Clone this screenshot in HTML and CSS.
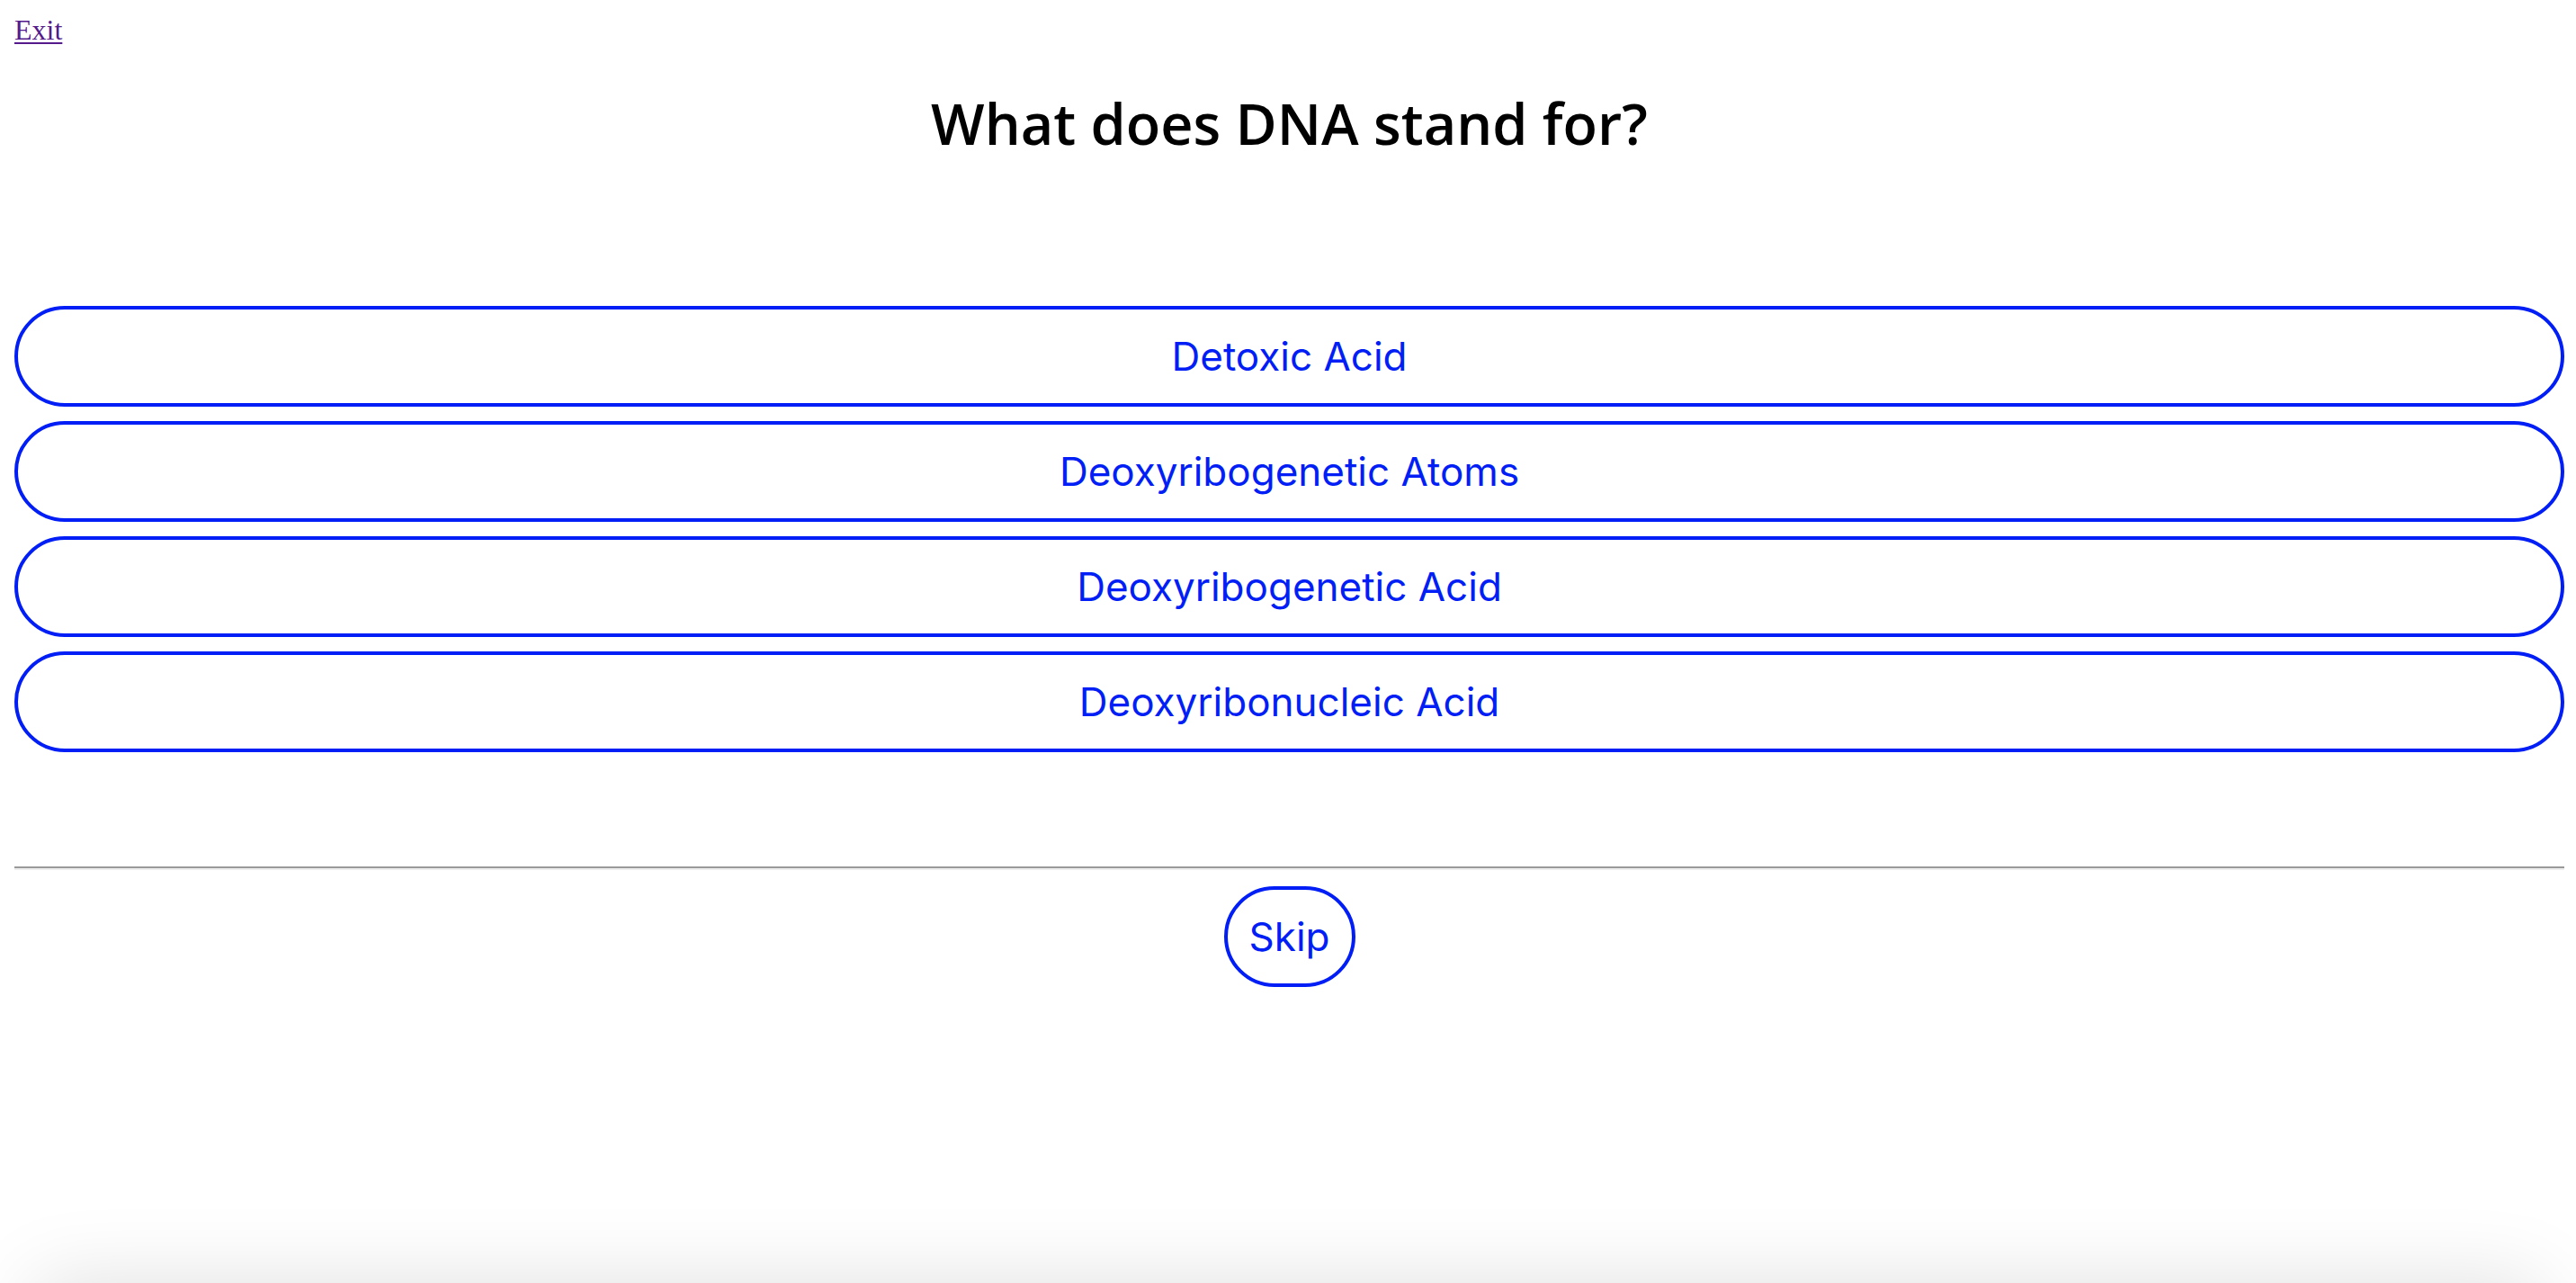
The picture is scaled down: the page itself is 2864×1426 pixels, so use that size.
FILE: index.html
```html
<!DOCTYPE html>
<html lang="en">
<head>
<meta charset="utf-8">
<title>Quiz</title>
<link rel="stylesheet" href="styles.css">
</head>
<body>
  <div class="topbar"><a class="exit" href="#">Exit</a></div>
  <h1 class="question">What does DNA stand for?</h1>
  <div class="answers">
    <button class="answer">Detoxic Acid</button>
    <button class="answer">Deoxyribogenetic Atoms</button>
    <button class="answer">Deoxyribogenetic Acid</button>
    <button class="answer">Deoxyribonucleic Acid</button>
  </div>
  <hr class="divider">
  <div class="skip-row"><button class="skip">Skip</button></div>
  <div class="bottom-shade"></div>
</body>
</html>
```

FILE: styles.css
```css
html, body {
  background: #ffffff;
}
body {
  margin: 16px 13px 16px 16px;
  font-family: "Liberation Serif", serif;
  overflow: hidden;
}
.topbar {
  font-size: 32px;
  line-height: 34px;
  height: 34px;
}
.exit {
  color: #551a8b;
  text-decoration: underline;
  text-decoration-thickness: 2px;
  text-underline-offset: 3px;
}
.question {
  margin: 43px 0 159px;
  font-family: "Open Sans", sans-serif;
  font-weight: 600;
  font-size: 63px;
  line-height: 88px;
  height: 88px;
  text-align: center;
  color: #000;
}
.answers {
  display: flex;
  flex-direction: column;
  gap: 16px;
}
.answer, .skip {
  box-sizing: border-box;
  height: 112px;
  border: 4px solid #001ef5;
  border-radius: 56px;
  background: #fff;
  color: #001ef5;
  font-family: Inter, "Liberation Sans", sans-serif;
  font-size: 44px;
  display: flex;
  align-items: center;
  justify-content: center;
  padding: 0 26px;
  cursor: pointer;
}
.answer {
  width: 100%;
}
.divider {
  margin: 127px 0 18px;
  border: 0;
  border-top: 2px solid #9a9a9a;
  border-bottom: 2px solid #eeeeee;
  height: 0;
}
.skip-row {
  display: flex;
  justify-content: center;
}
.skip {
  width: 146px;
  padding: 0;
}
.bottom-shade {
  position: fixed;
  left: 40px;
  right: 40px;
  top: 100%;
  height: 100px;
  box-shadow: 0 0 90px rgba(0, 0, 0, 0.13);
  background: #eee;
}
```
